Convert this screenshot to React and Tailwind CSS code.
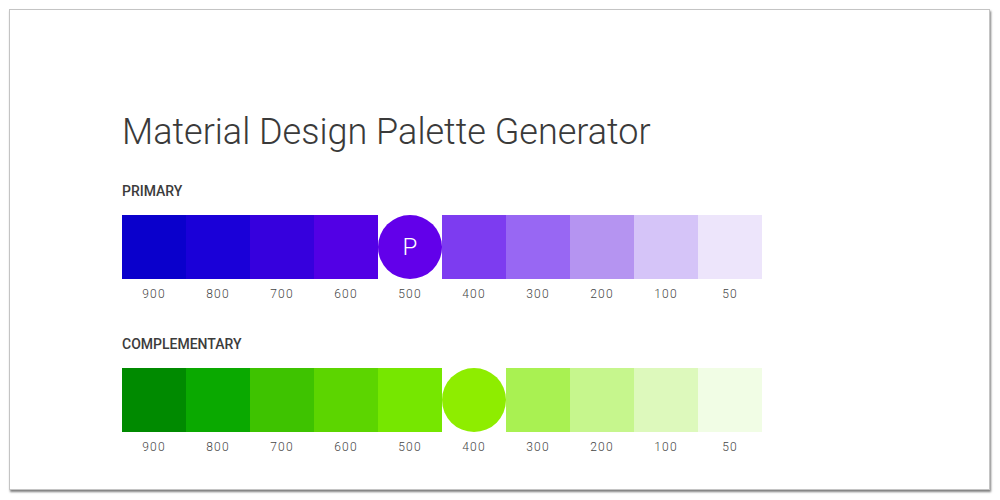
import React from 'react';

const primary = [
  { name: '900', color: '#0a00cc' },
  { name: '800', color: '#1a00d8' },
  { name: '700', color: '#3600dd' },
  { name: '600', color: '#5200e5' },
  { name: '500', color: '#6200ea', main: true, letter: 'P' },
  { name: '400', color: '#7d3cf0' },
  { name: '300', color: '#9867f3' },
  { name: '200', color: '#b594f1' },
  { name: '100', color: '#d5c4f8' },
  { name: '50', color: '#ede5fb' },
];

const complementary = [
  { name: '900', color: '#008a00' },
  { name: '800', color: '#0aa900' },
  { name: '700', color: '#3ec300' },
  { name: '600', color: '#5cd500' },
  { name: '500', color: '#76e700' },
  { name: '400', color: '#8eed00', main: true },
  { name: '300', color: '#a9f152' },
  { name: '200', color: '#c6f68d' },
  { name: '100', color: '#ddf9bc' },
  { name: '50', color: '#f1fde5' },
];

const Palette = ({ title, shades }) => (
  <div className="flex flex-col">
    <div className="text-[14px] leading-4 font-medium text-[#3c3c3c]">{title}</div>
    <div className="flex mt-[16px]">
      {shades.map((s) => (
        <div key={s.name} className="flex flex-col items-center w-16">
          {s.main ? (
            <div
              className="w-16 h-16 rounded-full flex items-center justify-center text-white text-[24px] font-light"
              style={{ backgroundColor: s.color }}
            >
              {s.letter}
            </div>
          ) : (
            <div className="w-16 h-16" style={{ backgroundColor: s.color }} />
          )}
          <div className="mt-[7px] text-[12px] leading-4 font-light text-[#444] tracking-[1.2px]">{s.name}</div>
        </div>
      ))}
    </div>
  </div>
);

export default function App() {
  return (
    <div className="w-[1000px] h-[500px] bg-white p-[9px] font-['Roboto',sans-serif]">
      <div className="w-[981px] h-[481px] bg-white border border-[#c4c4c4] shadow-[1px_2px_2px_rgba(0,0,0,0.5)] pl-[112px] pt-[100px]">
        <h1 className="text-[36px] leading-[45px] font-light text-[#3a3a3a]">Material Design Palette Generator</h1>
        <div className="mt-[28px]">
          <Palette title="PRIMARY" shades={primary} />
        </div>
        <div className="mt-[34px]">
          <Palette title="COMPLEMENTARY" shades={complementary} />
        </div>
      </div>
    </div>
  );
}
